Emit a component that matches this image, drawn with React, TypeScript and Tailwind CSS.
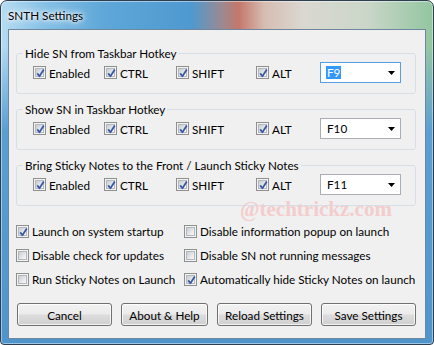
import React from "react";

const font = "font-['Lato','Noto_Sans',sans-serif]";

function Check({ checked }: { checked: boolean }) {
  return (
    <span className="relative block w-[13px] h-[13px] shrink-0 border border-[#8e8f8f] bg-[#f4f4f4] p-[1px]">
      <span className="block w-full h-full border border-[#b4b8bd] bg-[linear-gradient(135deg,#c8ccd2_0%,#e4e6e9_55%,#f8f8f8_100%)]" />
      {checked && (
        <svg className="absolute left-0 top-0" width="13" height="13" viewBox="0 0 13 13">
          <path d="M3.2 6.4 L5.4 9.2 L9.8 2.6" fill="none" stroke="#3b58a5" strokeWidth="1.8" strokeLinejoin="round" />
        </svg>
      )}
    </span>
  );
}

function CB({ label, checked, w }: { label: string; checked: boolean; w?: string }) {
  return (
    <div className={`flex items-center gap-[3px] whitespace-nowrap ${w ?? ""}`}>
      <Check checked={checked} />
      <span className="leading-[16px]">{label}</span>
    </div>
  );
}

function Drop({ value, focused }: { value: string; focused?: boolean }) {
  return (
    <div
      className={`w-[81px] h-[21px] bg-white border flex items-center justify-between pl-[5px] pr-[5px] ${
        focused ? "border-[#569de5]" : "border-[#abadb3]"
      }`}
    >
      {focused ? (
        <span className="bg-[#3399ff] text-white px-[1px] leading-[13px] h-[13px]">{value}</span>
      ) : (
        <span className="pl-[1px] leading-[13px]">{value}</span>
      )}
      <svg width="7" height="4" viewBox="0 0 7 4">
        <path d="M0 0H7L3.5 4Z" fill="#000" />
      </svg>
    </div>
  );
}

function Group({ title, value, focused }: { title: string; value: string; focused?: boolean }) {
  return (
    <fieldset className="w-[400px] ml-[7px] border border-[#d5dfe5] rounded-[3px]">
      <legend className="ml-[6px] px-[2px] leading-[16px] whitespace-nowrap">{title}</legend>
      <div className="flex items-center pl-[16px] pt-[1px] pb-[10px]">
        <CB label="Enabled" checked w="w-[71px]" />
        <CB label="CTRL" checked w="w-[72px]" />
        <CB label="SHIFT" checked w="w-[80px]" />
        <CB label="ALT" checked w="w-[64px]" />
        <Drop value={value} focused={focused} />
      </div>
    </fieldset>
  );
}

function Btn({ label, w }: { label: string; w: string }) {
  return (
    <div
      className={`${w} h-[23px] rounded-[3px] border border-[#707070] bg-[linear-gradient(180deg,#f2f2f2_0%,#ebebeb_48%,#dddddd_52%,#cfcfcf_100%)] shadow-[inset_0_0_0_1px_rgba(255,255,255,0.75)] flex items-center justify-center leading-[16px] whitespace-nowrap`}
    >
      {label}
    </div>
  );
}

export default function App() {
  return (
    <div
      className={`${font} text-[11.7px] text-black relative w-[434px] h-[345px] overflow-hidden rounded-t-[7px] rounded-b-[4px] border border-[#2c3e50] bg-[linear-gradient(180deg,rgba(91,159,210,0)_0px,rgba(91,159,210,0)_45px,#5b9fd2_130px,#4f95cc_100%),linear-gradient(90deg,#b6dcf2_0%,#86c1e6_10%,#5ea7d8_24%,#4e99d0_44%,#9a8a92_51%,#c5776b_55%,#d6bdb3_61%,#dad8d1_70%,#cad6c8_85%,#92c6a0_100%)] shadow-[inset_0_0_0_1px_rgba(255,255,255,0.45)]`}
    >
      <div className="h-[28px] flex items-center pl-[7px]">
        <span className="leading-[16px] [text-shadow:0_0_6px_#fff,0_0_10px_#fff,0_0_3px_#fff]">SNTH Settings</span>
      </div>
      <div className="relative mx-[7px] h-[310px] border border-[#6f879e] bg-[#f0f0f0] flex flex-col">
        <div className="h-[15px]" />
        <Group title="Hide SN from Taskbar Hotkey" value="F9" focused />
        <div className="h-[7px]" />
        <Group title="Show SN in Taskbar Hotkey" value="F10" />
        <div className="h-[7px]" />
        <Group title="Bring Sticky Notes to the Front / Launch Sticky Notes" value="F11" />
        <div className="mt-[13px] ml-[7px] grid grid-cols-[168px_1fr] auto-rows-[24px] items-center">
          <CB label="Launch on system startup" checked />
          <CB label="Disable information popup on launch" checked={false} />
          <CB label="Disable check for updates" checked={false} />
          <CB label="Disable SN not running messages" checked={false} />
          <CB label="Run Sticky Notes on Launch" checked={false} />
          <CB label="Automatically hide Sticky Notes on launch" checked />
        </div>
        <div className="mt-[12px] ml-[8px] flex gap-[9px]">
          <Btn label="Cancel" w="w-[95px]" />
          <Btn label="About &amp; Help" w="w-[87px]" />
          <Btn label="Reload Settings" w="w-[95px]" />
          <Btn label="Save Settings" w="w-[95px]" />
        </div>
        <div className="absolute left-[231px] top-[168px] font-['Liberation_Serif',serif] font-bold text-[21px] leading-[22px] text-[#f3cdcd] pointer-events-none">
          @techtrickz.com
        </div>
      </div>
    </div>
  );
}
